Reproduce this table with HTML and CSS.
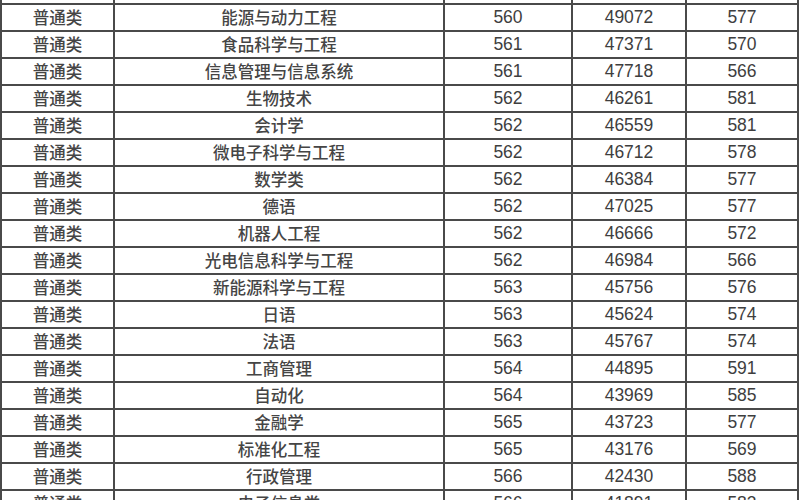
FILE: index.html
```html
<!DOCTYPE html>
<html lang="zh">
<head>
<meta charset="utf-8">
<title>录取分数</title>
<link rel="stylesheet" href="styles.css">
</head>
<body>
<table class="scores">
<colgroup>
<col class="c1"><col class="c2"><col class="c3"><col class="c4"><col class="c5">
</colgroup>
<tbody>
<tr class="hidden-row"><td></td><td></td><td></td><td></td><td></td></tr>
<tr><td>普通类</td><td>能源与动力工程</td><td>560</td><td>49072</td><td>577</td></tr>
<tr><td>普通类</td><td>食品科学与工程</td><td>561</td><td>47371</td><td>570</td></tr>
<tr><td>普通类</td><td>信息管理与信息系统</td><td>561</td><td>47718</td><td>566</td></tr>
<tr><td>普通类</td><td>生物技术</td><td>562</td><td>46261</td><td>581</td></tr>
<tr><td>普通类</td><td>会计学</td><td>562</td><td>46559</td><td>581</td></tr>
<tr><td>普通类</td><td>微电子科学与工程</td><td>562</td><td>46712</td><td>578</td></tr>
<tr><td>普通类</td><td>数学类</td><td>562</td><td>46384</td><td>577</td></tr>
<tr><td>普通类</td><td>德语</td><td>562</td><td>47025</td><td>577</td></tr>
<tr><td>普通类</td><td>机器人工程</td><td>562</td><td>46666</td><td>572</td></tr>
<tr><td>普通类</td><td>光电信息科学与工程</td><td>562</td><td>46984</td><td>566</td></tr>
<tr><td>普通类</td><td>新能源科学与工程</td><td>563</td><td>45756</td><td>576</td></tr>
<tr><td>普通类</td><td>日语</td><td>563</td><td>45624</td><td>574</td></tr>
<tr><td>普通类</td><td>法语</td><td>563</td><td>45767</td><td>574</td></tr>
<tr><td>普通类</td><td>工商管理</td><td>564</td><td>44895</td><td>591</td></tr>
<tr><td>普通类</td><td>自动化</td><td>564</td><td>43969</td><td>585</td></tr>
<tr><td>普通类</td><td>金融学</td><td>565</td><td>43723</td><td>577</td></tr>
<tr><td>普通类</td><td>标准化工程</td><td>565</td><td>43176</td><td>569</td></tr>
<tr><td>普通类</td><td>行政管理</td><td>566</td><td>42430</td><td>588</td></tr>
<tr><td>普通类</td><td>电子信息类</td><td>566</td><td>41891</td><td>583</td></tr>
</tbody>
</table>
</body>
</html>
```
FILE: styles.css
```css
html, body {
  margin: 0;
  padding: 0;
  background: #ffffff;
  overflow: hidden;
  width: 800px;
  height: 500px;
}
.scores {
  border-collapse: collapse;
  table-layout: fixed;
  width: 797px;
  margin-top: -24.5px;
  margin-left: 0;
  font-family: "Liberation Sans", "Noto Sans CJK SC", Arial, sans-serif;
  font-size: 17.5px;
  color: #3e3e3e;
}
.c1 { width: 113px; }
.c2 { width: 330px; }
.c3 { width: 128px; }
.c4 { width: 114px; }
.c5 { width: 112px; }
.scores tr {
  height: 27px;
}
.scores td {
  border: 2px solid #4a4a4a;
  padding: 0;
  text-align: center;
  vertical-align: middle;
  line-height: 23px;
  white-space: nowrap;
}
.scores td:nth-child(1),
.scores td:nth-child(2) {
  font-family: "Noto Sans CJK SC", sans-serif;
  font-size: 16.5px;
  font-weight: 500;
  color: #454545;
}
```
